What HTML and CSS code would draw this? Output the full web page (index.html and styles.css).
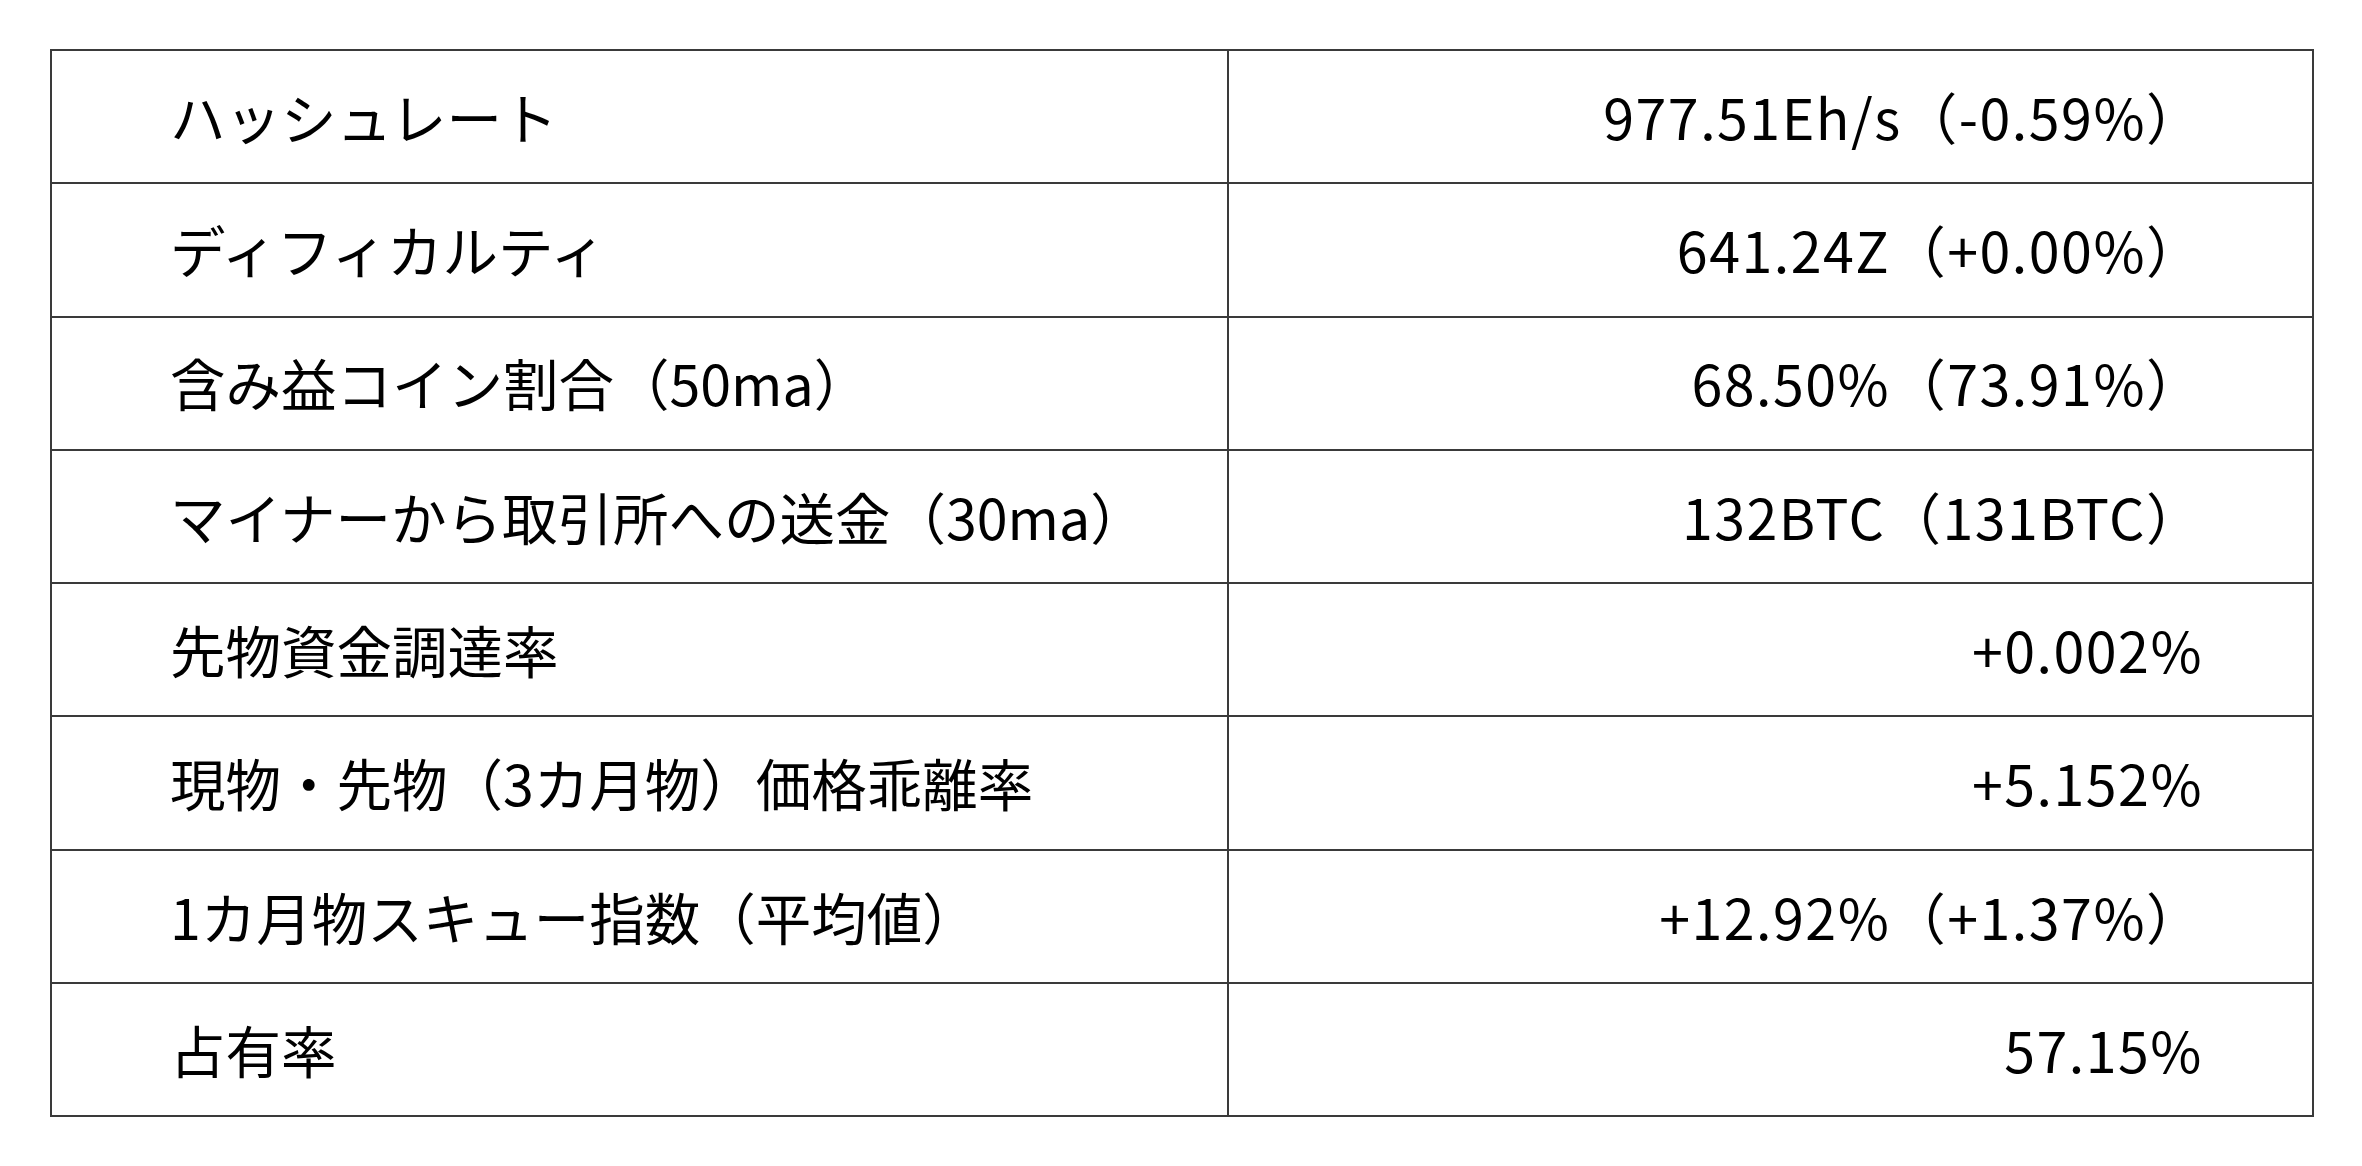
FILE: index.html
```html
<!DOCTYPE html>
<html lang="ja">
<head>
<meta charset="utf-8">
<title>指標</title>
<link rel="stylesheet" href="styles.css">
</head>
<body>
<table class="metrics">
  <colgroup>
    <col class="col-label">
    <col class="col-value">
  </colgroup>
  <tbody>
    <tr><td class="label">ハッシュレート</td><td class="value">977.51Eh/s（-0.59%）</td></tr>
    <tr><td class="label">ディフィカルティ</td><td class="value">641.24Z（+0.00%）</td></tr>
    <tr><td class="label">含み益コイン割合（50ma）</td><td class="value">68.50%（73.91%）</td></tr>
    <tr><td class="label">マイナーから取引所への送金（30ma）</td><td class="value">132BTC（131BTC）</td></tr>
    <tr><td class="label">先物資金調達率</td><td class="value">+0.002%</td></tr>
    <tr><td class="label">現物・先物（3カ月物）価格乖離率</td><td class="value">+5.152%</td></tr>
    <tr><td class="label">1カ月物スキュー指数（平均値）</td><td class="value">+12.92%（+1.37%）</td></tr>
    <tr><td class="label">占有率</td><td class="value">57.15%</td></tr>
  </tbody>
</table>
</body>
</html>
```
FILE: styles.css
```css
html, body {
  margin: 0;
  padding: 0;
  background: #ffffff;
}
body {
  padding: 49px 0 0 50px;
  font-family: "Noto Sans CJK JP", "Noto Sans", sans-serif;
  color: #000000;
}
.metrics {
  border-collapse: collapse;
  width: 2264px;
  table-layout: fixed;
}
.col-label {
  width: 1177px;
}
.metrics td {
  border: 2px solid #3a3a3a;
  height: 131.3px;
  padding: 0;
  font-size: 55.5px;
  line-height: 1;
  vertical-align: middle;
  white-space: nowrap;
}
.metrics .label {
  padding-left: 118px;
  text-align: left;
}
.metrics .value {
  padding-right: 109px;
  text-align: right;
  letter-spacing: 1.5px;
}
```
